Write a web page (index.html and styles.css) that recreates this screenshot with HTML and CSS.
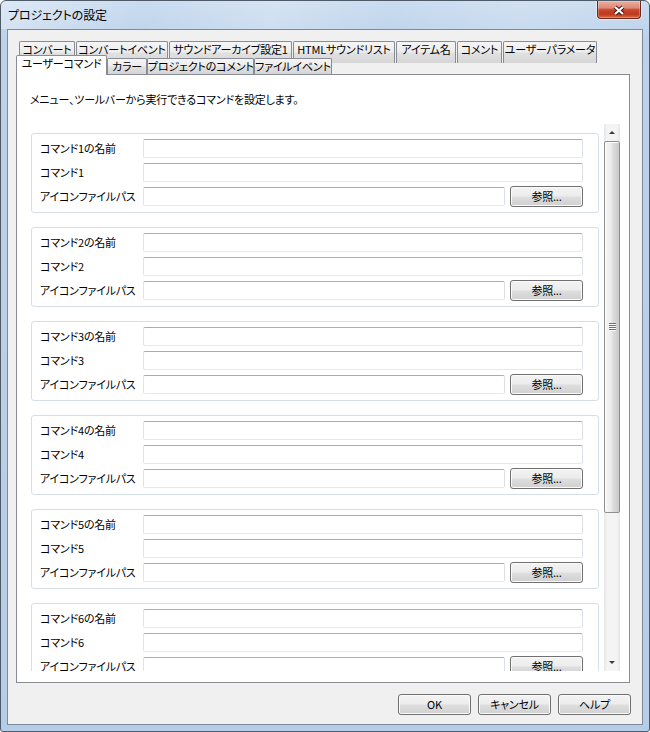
FILE: index.html
```html
<!DOCTYPE html>
<html lang="ja">
<head>
<meta charset="utf-8">
<title>プロジェクトの設定</title>
<link rel="stylesheet" href="styles.css">
</head>
<body>
<div class="window">
  <div class="titlebar">
    <span class="title">プロジェクトの設定</span>
    <div class="close">
      <svg width="42" height="18" viewBox="0 0 42 18">
        <path d="M17 6 L25 13 M25 6 L17 13" stroke="#3b1a14" stroke-width="4.2" fill="none"/>
        <path d="M17 6 L25 13 M25 6 L17 13" stroke="#ffffff" stroke-width="2.2" fill="none"/>
      </svg>
    </div>
  </div>
  <div class="client">
    <div class="tabs">
      <div class="tabrow row1">
        <div class="tab">コンバート</div>
        <div class="tab">コンバートイベント</div>
        <div class="tab">サウンドアーカイブ設定1</div>
        <div class="tab">HTMLサウンドリスト</div>
        <div class="tab">アイテム名</div>
        <div class="tab">コメント</div>
        <div class="tab">ユーザーパラメータ</div>
      </div>
      <div class="tabrow row2">
        <div class="tab sel">ユーザーコマンド</div>
        <div class="tab">カラー</div>
        <div class="tab">プロジェクトのコメント</div>
        <div class="tab">ファイルイベント</div>
      </div>
    </div>
    <div class="page">
      <p class="desc">メニュー、ツールバーから実行できるコマンドを設定します。</p>
      <div class="scrollarea">
        <div class="viewport">
          <div class="group">
            <span class="label">コマンド1の名前</span><div class="field"></div>
            <span class="label">コマンド1</span><div class="field"></div>
            <span class="label">アイコンファイルパス</span><div class="pathrow"><div class="field"></div><div class="btn">参照...</div></div>
          </div>
          <div class="group">
            <span class="label">コマンド2の名前</span><div class="field"></div>
            <span class="label">コマンド2</span><div class="field"></div>
            <span class="label">アイコンファイルパス</span><div class="pathrow"><div class="field"></div><div class="btn">参照...</div></div>
          </div>
          <div class="group">
            <span class="label">コマンド3の名前</span><div class="field"></div>
            <span class="label">コマンド3</span><div class="field"></div>
            <span class="label">アイコンファイルパス</span><div class="pathrow"><div class="field"></div><div class="btn">参照...</div></div>
          </div>
          <div class="group">
            <span class="label">コマンド4の名前</span><div class="field"></div>
            <span class="label">コマンド4</span><div class="field"></div>
            <span class="label">アイコンファイルパス</span><div class="pathrow"><div class="field"></div><div class="btn">参照...</div></div>
          </div>
          <div class="group">
            <span class="label">コマンド5の名前</span><div class="field"></div>
            <span class="label">コマンド5</span><div class="field"></div>
            <span class="label">アイコンファイルパス</span><div class="pathrow"><div class="field"></div><div class="btn">参照...</div></div>
          </div>
          <div class="group">
            <span class="label">コマンド6の名前</span><div class="field"></div>
            <span class="label">コマンド6</span><div class="field"></div>
            <span class="label">アイコンファイルパス</span><div class="pathrow"><div class="field"></div><div class="btn">参照...</div></div>
          </div>
        </div>
        <div class="sb">
          <div class="sb-arrow"><span class="tri-up"></span></div>
          <div class="sb-track"><div class="thumb"><span class="grip"></span></div></div>
          <div class="sb-arrow"><span class="tri-down"></span></div>
        </div>
      </div>
    </div>
    <div class="buttons">
      <div class="btn">OK</div>
      <div class="btn">キャンセル</div>
      <div class="btn">ヘルプ</div>
    </div>
  </div>
</div>
</body>
</html>
```

FILE: styles.css
```css
* { box-sizing: border-box; }
html, body { margin: 0; padding: 0; }
body {
  width: 650px;
  height: 732px;
  overflow: hidden;
  font-family: "Noto Sans CJK JP", "Noto Sans", sans-serif;
  font-size: 11px;
  letter-spacing: -0.2px;
  color: #000;
  font-feature-settings: "palt";
  background: #fff;
}
.window {
  width: 650px;
  height: 732px;
  border: 1px solid #4e5a67;
  border-radius: 6px 6px 3px 3px;
  background: linear-gradient(#cadcf0, #bcd2ea 40px, #b6cde7);
  padding: 0 6px 6px;
  display: flex;
  flex-direction: column;
  overflow: hidden;
}
.titlebar {
  height: 28px;
  margin: 0 -6px;
  padding: 0 8px 0 7px;
  display: flex;
  justify-content: space-between;
  align-items: flex-start;
  background: linear-gradient(100deg, rgba(255,255,255,0.35) 0, rgba(255,255,255,0) 22%, rgba(255,255,255,0.22) 42%, rgba(255,255,255,0) 60%, rgba(255,255,255,0.15) 80%, rgba(255,255,255,0) 100%);
}
.title {
  padding-top: 6px;
  line-height: 16px;
  font-size: 12px;
  letter-spacing: -0.1px;
}
.close {
  width: 44px;
  height: 19px;
  margin-top: -1px;
  border: 1px solid #6a271c;
  border-top-color: #8a4a3e;
  border-radius: 0 0 4px 4px;
  background: linear-gradient(#eab0a2, #dc8a76 40%, #c9472d 52%, #c0381f 78%, #d9713f);
  box-shadow: 0 0 0 1px rgba(255,255,255,0.45), inset 0 0 0 1px rgba(255,255,255,0.25);
  display: flex;
  align-items: center;
  justify-content: center;
}
.close svg { display: block; }
.client {
  flex: 1;
  background: #f0f0f0;
  border: 1px solid #7d8b99;
  display: flex;
  flex-direction: column;
}
.tabs {
  margin: 11px 0 0 8px;
  width: 614px;
}
.tabrow { display: flex; }
.tab {
  border: 1px solid #898c95;
  border-bottom: none;
  border-radius: 2px 2px 0 0;
  background: linear-gradient(#f5f5f5, #ededed 45%, #e0e0e0 55%, #d6d6d6);
  text-align: center;
  white-space: nowrap;
  overflow: hidden;
  flex: none;
}
.row1 { height: 22px; padding-left: 3px; }
.row1 .tab {
  height: 22px;
  line-height: 13px;
  padding-top: 1px;
  margin-right: 1px;
}
.row1 .tab:nth-child(1) { width: 56px; }
.row1 .tab:nth-child(2) { width: 92px; }
.row1 .tab:nth-child(3) { width: 123px; }
.row1 .tab:nth-child(4) { width: 102px; }
.row1 .tab:nth-child(5) { width: 60px; }
.row1 .tab:nth-child(6) { width: 45px; }
.row1 .tab:nth-child(7) { width: 94px; margin-right: 0; }
.row2 {
  height: 19px;
  margin-top: -8px;
  position: relative;
  z-index: 1;
  align-items: flex-end;
}
.row2 .tab {
  height: 16px;
  line-height: 14px;
}
.row2 .tab.sel {
  height: 20px;
  margin-bottom: -1px;
  padding-top: 1px;
  background: #fff;
  position: relative;
  z-index: 2;
  line-height: 13px;
  width: 91px;
}
.row2 .tab:nth-child(2) { width: 40px; }
.row2 .tab:nth-child(3) { width: 107px; }
.row2 .tab:nth-child(4) { width: 78px; }
.page {
  margin-left: 8px;
  width: 614px;
  height: 609px;
  border: 1px solid #898c95;
  background: #fff;
}
.desc {
  margin: 16px 0 0 13px;
  line-height: 16px;
}
.scrollarea {
  display: flex;
  width: 589px;
  height: 547px;
  margin: 17px 0 0 14px;
}
.viewport {
  flex: 1;
  overflow: hidden;
  padding-top: 9px;
}
.group {
  width: 568px;
  height: 80px;
  flex: none;
  border: 1px solid #d5dfe5;
  border-radius: 3px;
  margin-bottom: 14px;
  padding: 5px 15px 0 8px;
  display: grid;
  grid-template-columns: 103px 1fr;
  grid-template-rows: 19px 19px 19px;
  row-gap: 5px;
  align-items: center;
}
.label {
  line-height: 19px;
  white-space: nowrap;
}
.field {
  height: 19px;
  border: 1px solid;
  border-color: #abadb3 #dbdfe6 #e3e9ef #e2e3ea;
  border-radius: 2px;
  background: #fff;
}
.pathrow {
  display: flex;
  align-items: center;
  gap: 5px;
  height: 19px;
}
.pathrow .field { flex: 1; }
.btn {
  width: 73px;
  height: 21px;
  flex: none;
  border: 1px solid #707070;
  border-radius: 3px;
  background: linear-gradient(#f3f3f3, #ececec 48%, #dedede 52%, #d0d0d0);
  box-shadow: inset 0 0 0 1px #fbfbfb;
  text-align: center;
  line-height: 19px;
}
.sb {
  width: 16px;
  height: 547px;
  flex: none;
  display: flex;
  flex-direction: column;
  background: linear-gradient(to right, #e6e6e6, #f4f4f4 3px, #f4f4f4 13px, #e6e6e6);
}
.sb-arrow {
  height: 17px;
  flex: none;
  display: flex;
  align-items: center;
  justify-content: center;
}
.tri-up {
  width: 0;
  height: 0;
  border-left: 3px solid transparent;
  border-right: 3px solid transparent;
  border-bottom: 3px solid #3a3a3a;
}
.tri-down {
  width: 0;
  height: 0;
  border-left: 3px solid transparent;
  border-right: 3px solid transparent;
  border-top: 3px solid #3a3a3a;
}
.sb-track { flex: 1; }
.thumb {
  height: 372px;
  border: 1px solid #8f8f8f;
  border-radius: 2px;
  background: linear-gradient(to right, #f7f7f7, #ededed 40%, #dcdcdc 60%, #c9c9c9);
  box-shadow: inset 1px 1px 0 #ffffff;
  display: flex;
  align-items: center;
  justify-content: center;
}
.grip {
  width: 7px;
  height: 8px;
  background: repeating-linear-gradient(#707070 0 1px, #fcfcfc 1px 2px);
}
.buttons {
  display: flex;
  justify-content: flex-end;
  gap: 7px;
  margin-top: 11px;
  padding-right: 11px;
}
```
